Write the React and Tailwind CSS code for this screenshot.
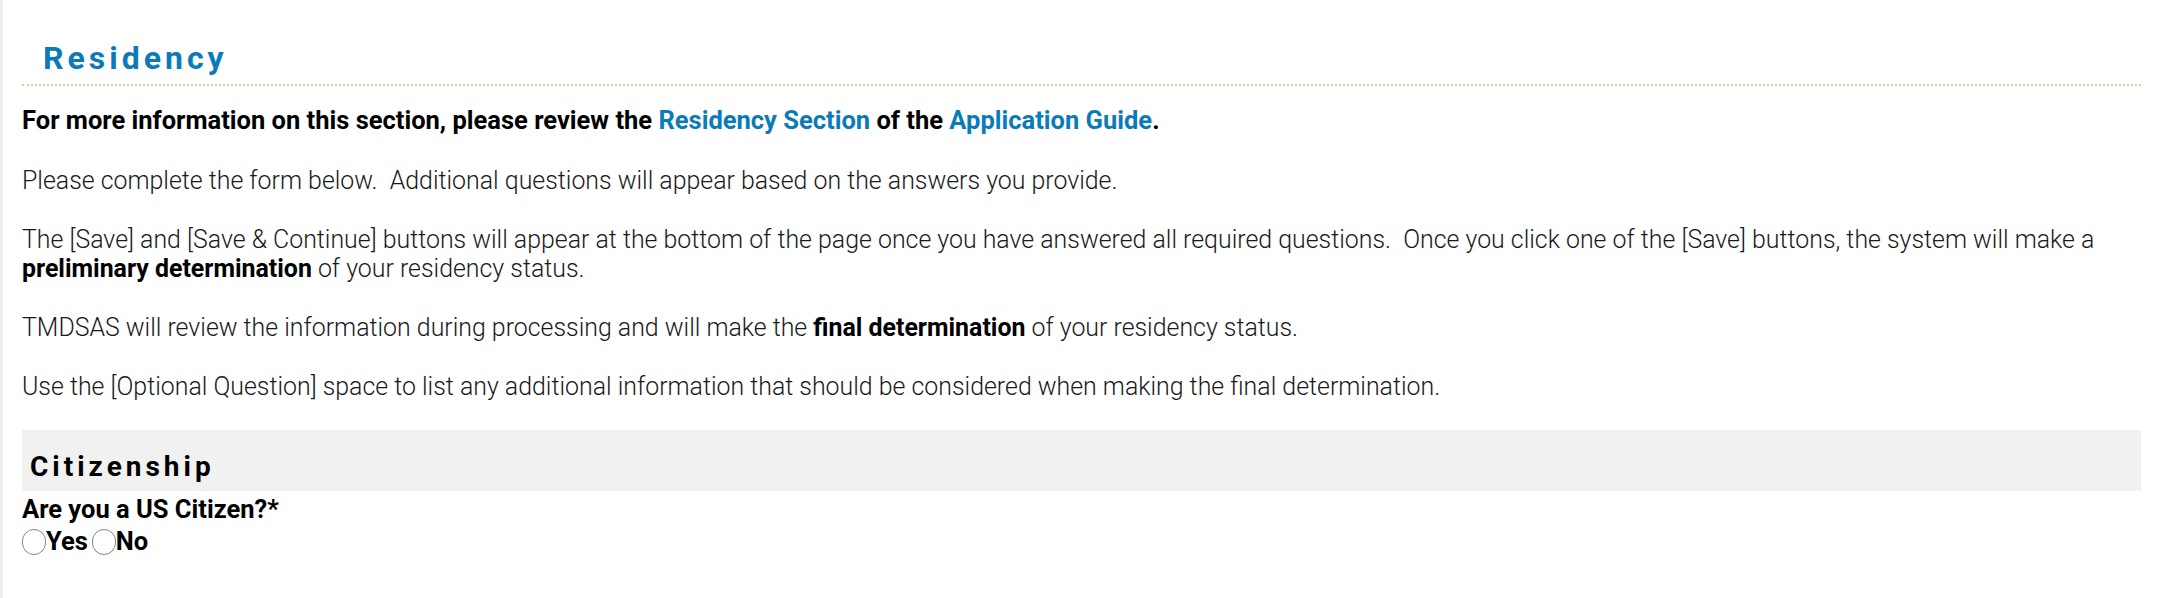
import React from "react";

const Radio = ({ name, label }) => (
  <label className="flex items-center cursor-pointer">
    <input
      type="radio"
      name={name}
      className="appearance-none m-0 w-[24px] h-[26px] rounded-full border-[1.5px] border-[#858585] bg-white"
    />
    <span className="font-bold">{label}</span>
  </label>
);

const App = () => {
  return (
    <div className="min-h-screen bg-white border-l-[3px] border-[#efefef] font-[family-name:Roboto,sans-serif] text-black">
      <div className="pl-[19px] pr-[21px]">
        <div className="pt-[40px] pb-[8px] border-b-2 border-dotted border-[#dbcf9f]">
          <h1 className="pl-[21px] text-[32px] leading-[36px] font-bold tracking-[4px] text-[#0b7bb7]">
            Residency
          </h1>
        </div>

        <p className="mt-[20px] text-[25.5px] leading-[29px] font-bold">
          For more information on this section, please review the{" "}
          <a href="#" className="text-[#0b7bb7]">
            Residency Section
          </a>{" "}
          of the{" "}
          <a href="#" className="text-[#0b7bb7]">
            Application Guide
          </a>
          .
        </p>

        <div className="mt-[31px] flex flex-col gap-[30px] text-[24.9px] leading-[29px] font-light text-[#1a1a1a]">
          <p>
            Please complete the form below.{"\u00a0 "}Additional questions will
            appear based on the answers you provide.
          </p>
          <p>
            The [Save] and [Save &amp; Continue] buttons will appear at the
            bottom of the page once you have answered all required questions.
            {"\u00a0 "}Once you click one of the [Save] buttons, the system will
            make a <span className="font-bold text-black">preliminary determination</span> of
            your residency status.
          </p>
          <p>
            TMDSAS will review the information during processing and will make
            the <span className="font-bold text-black">final determination</span> of your
            residency status.
          </p>
          <p>
            Use the [Optional Question] space to list any additional information
            that should be considered when making the final determination.
          </p>
        </div>

        <div className="mt-[29px] bg-[#f1f1f1] pl-[8px] pt-[21px] pb-[8px]">
          <h2 className="text-[28px] leading-[32px] font-bold tracking-[4px]">
            Citizenship
          </h2>
        </div>

        <div className="mt-[4px]">
          <p className="text-[25.5px] leading-[29px] font-bold">
            Are you a US Citizen?*
          </p>
          <div className="mt-[3px] flex items-center gap-[4px] text-[25.5px] leading-[29px]">
            <Radio name="citizen" label="Yes" />
            <Radio name="citizen" label="No" />
          </div>
        </div>
      </div>
    </div>
  );
};

export default App;
